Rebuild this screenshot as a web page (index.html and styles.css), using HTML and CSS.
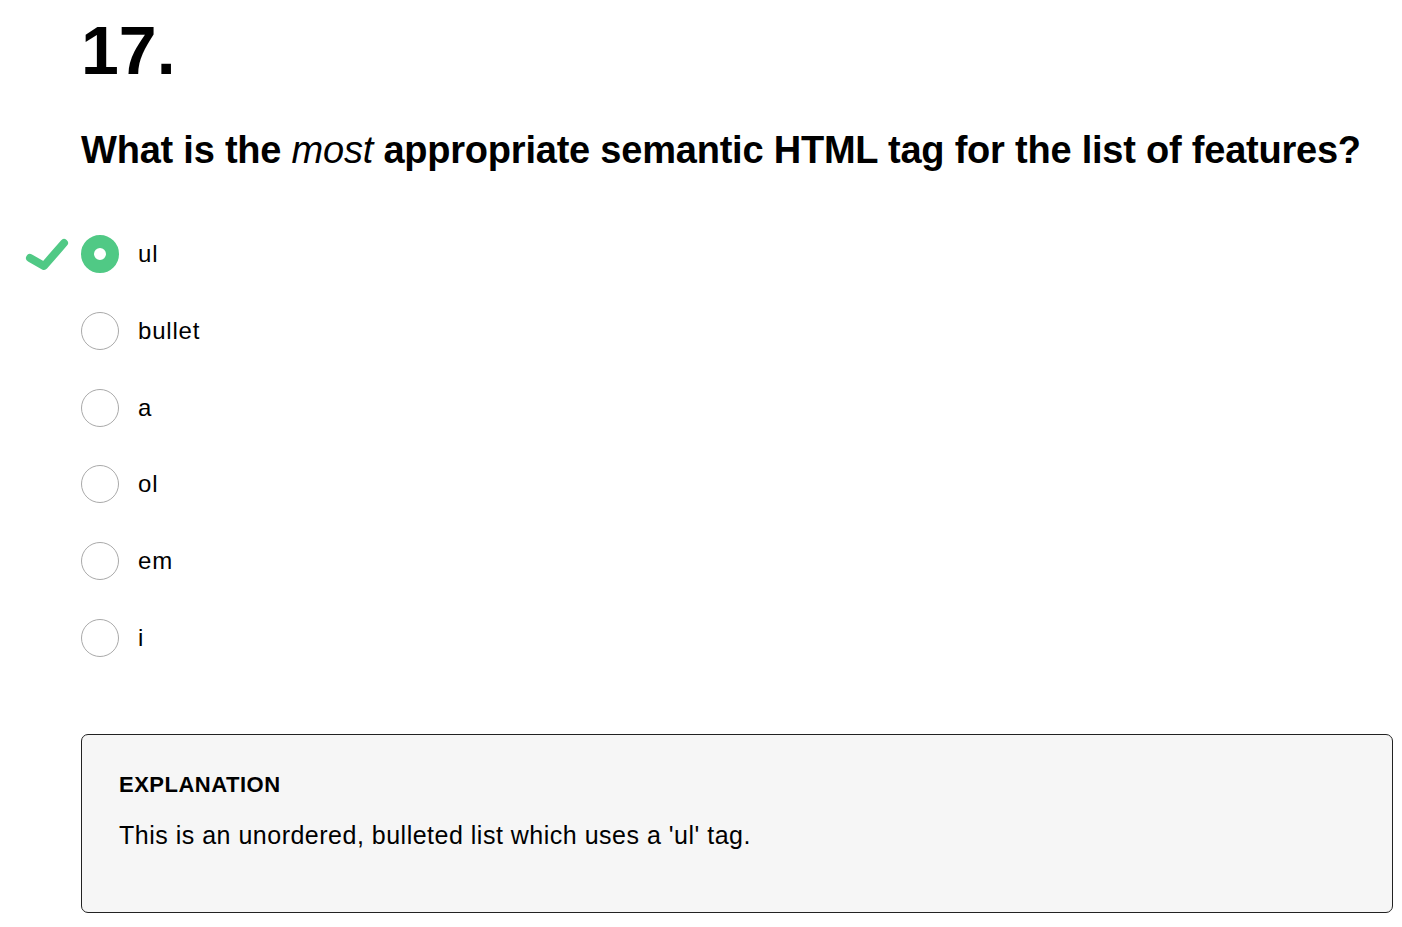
FILE: index.html
```html
<!DOCTYPE html>
<html>
<head>
<meta charset="utf-8">
<link rel="stylesheet" href="styles.css">
</head>
<body>
<main class="quiz">
  <h1 class="num">17.</h1>
  <h2 class="question">What is the <em>most</em> appropriate semantic HTML tag for the list of features?</h2>
  <ul class="options">
    <li class="option correct">
      <svg class="check" width="48" height="40" viewBox="0 0 48 40"><path d="M6 23 L20 31 L40 8" fill="none" stroke="#50c985" stroke-width="8" stroke-linecap="round" stroke-linejoin="round"/></svg>
      <span class="radio selected"></span><span class="label">ul</span>
    </li>
    <li class="option"><span class="radio"></span><span class="label">bullet</span></li>
    <li class="option"><span class="radio"></span><span class="label">a</span></li>
    <li class="option"><span class="radio"></span><span class="label">ol</span></li>
    <li class="option"><span class="radio"></span><span class="label">em</span></li>
    <li class="option"><span class="radio"></span><span class="label">i</span></li>
  </ul>
  <section class="explanation">
    <h3 class="exp-title">EXPLANATION</h3>
    <p class="exp-text">This is an unordered, bulleted list which uses a 'ul' tag.</p>
  </section>
</main>
</body>
</html>
```

FILE: styles.css
```css
html, body {
  margin: 0;
  padding: 0;
  background: #fff;
}
body {
  font-family: "Liberation Sans", Arial, sans-serif;
  color: #000;
}
.quiz {
  padding: 16px 9px 0 81px;
}
.num {
  margin: 0;
  font-size: 68px;
  line-height: 68px;
  font-weight: bold;
}
.question {
  margin: 43px 0 0 0;
  font-size: 38px;
  line-height: 46px;
  font-weight: bold;
  letter-spacing: -0.22px;
}
.question em {
  font-weight: normal;
  font-style: italic;
}
.options {
  list-style: none;
  margin: 62px 0 0 0;
  padding: 0;
  display: flex;
  flex-direction: column;
  gap: 38.8px;
}
.option {
  position: relative;
  display: flex;
  align-items: center;
  height: 38px;
  gap: 19px;
}
.check {
  position: absolute;
  left: -57px;
  top: 0;
}
.radio {
  box-sizing: border-box;
  width: 38px;
  height: 38px;
  border-radius: 50%;
  border: 1px solid #aaaaaa;
  background: #fff;
  flex: none;
}
.radio.selected {
  border: 13px solid #50c985;
  background: #fff;
}
.label {
  font-size: 24px;
  line-height: 28px;
  letter-spacing: 0.8px;
}
.explanation {
  margin-top: 77px;
  border: 1px solid #222;
  border-radius: 7px;
  background: #f6f6f6;
  padding: 37px 37px 0 37px;
  height: 179px;
  box-sizing: border-box;
}
.exp-title {
  margin: 0;
  font-size: 22px;
  line-height: 26px;
  font-weight: bold;
  letter-spacing: 0.5px;
}
.exp-text {
  margin: 22px 0 0 0;
  font-size: 25px;
  line-height: 30px;
  letter-spacing: 0.5px;
}
```
